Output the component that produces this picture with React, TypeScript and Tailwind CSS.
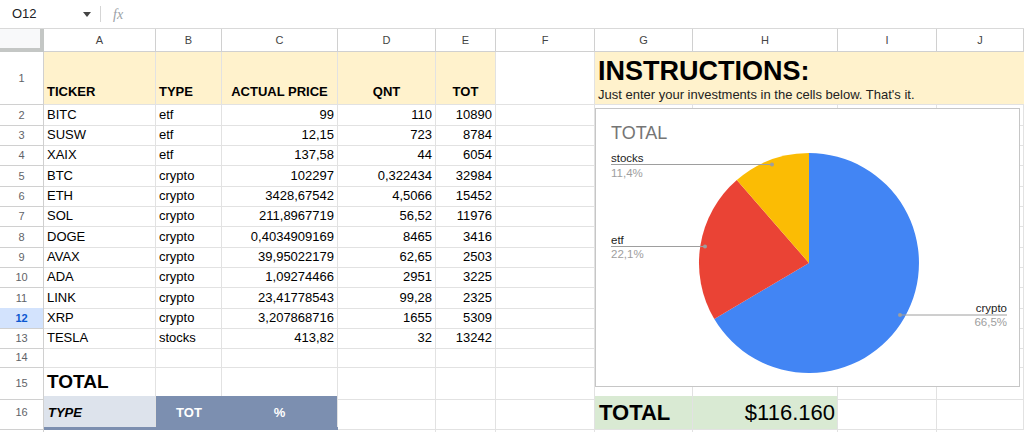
import React from "react";

const COLS = "grid grid-cols-[44px_112px_66px_116px_98px_60px_99px_98px_145px_99px_87px]";
const cell = "border-r border-b border-[#e2e2e2] overflow-visible whitespace-nowrap";
const rh = "border-r border-b border-[#d0d0d0] flex items-center justify-center text-[11px] text-[#5f6368]";

const data: [string, string, string, string, string][] = [
  ["BITC", "etf", "99", "110", "10890"],
  ["SUSW", "etf", "12,15", "723", "8784"],
  ["XAIX", "etf", "137,58", "44", "6054"],
  ["BTC", "crypto", "102297", "0,322434", "32984"],
  ["ETH", "crypto", "3428,67542", "4,5066", "15452"],
  ["SOL", "crypto", "211,8967719", "56,52", "11976"],
  ["DOGE", "crypto", "0,4034909169", "8465", "3416"],
  ["AVAX", "crypto", "39,95022179", "62,65", "2503"],
  ["ADA", "crypto", "1,09274466", "2951", "3225"],
  ["LINK", "crypto", "23,41778543", "99,28", "2325"],
  ["XRP", "crypto", "3,207868716", "1655", "5309"],
  ["TESLA", "stocks", "413,82", "32", "13242"],
];
const heights = ["h-[20px]", "h-[20px]", "h-[21px]", "h-[20px]", "h-[20px]", "h-[21px]", "h-[20px]", "h-[20px]", "h-[21px]", "h-[20px]", "h-[20px]", "h-[20px]"];

function Empty({ n }: { n: number }) {
  return (
    <>
      {Array.from({ length: n }).map((_, i) => (
        <div key={i} className={cell} />
      ))}
    </>
  );
}

function Chart() {
  return (
    <div className="absolute left-[595px] top-[108px] w-[425px] h-[279px] bg-white border border-[#c6c6c6]">
      <svg width="423" height="277" viewBox="0 0 423 277" className="block">
        <path d="M213 154 L213 44 A110 110 0 1 1 118.3 210 Z" fill="#4285f4" />
        <path d="M213 154 L118.3 210 A110 110 0 0 1 140.8 71 Z" fill="#ea4335" />
        <path d="M213 154 L140.8 71 A110 110 0 0 1 213 44 Z" fill="#fbbc04" />
        <text x="15" y="30" fontSize="18" fill="#757575" fontFamily="Liberation Sans, Arial, sans-serif">TOTAL</text>
        <g fontFamily="Liberation Sans, Arial, sans-serif" fontSize="11.5">
          <text x="15" y="53" fill="#222">stocks</text>
          <line x1="15" y1="55.5" x2="176" y2="55.5" stroke="#9e9e9e" strokeWidth="1" />
          <circle cx="176" cy="55.5" r="2" fill="#9e9e9e" />
          <text x="15" y="68" fill="#9e9e9e">11,4%</text>
          <text x="15" y="135" fill="#222">etf</text>
          <line x1="15" y1="137.5" x2="109" y2="137.5" stroke="#9e9e9e" strokeWidth="1" />
          <circle cx="109" cy="137.5" r="2" fill="#9e9e9e" />
          <text x="15" y="149" fill="#9e9e9e">22,1%</text>
          <text x="411" y="202.5" fill="#222" textAnchor="end">crypto</text>
          <line x1="304" y1="206" x2="411" y2="206" stroke="#9e9e9e" strokeWidth="1" />
          <circle cx="304" cy="206" r="2" fill="#9e9e9e" />
          <text x="411" y="217" fill="#9e9e9e" textAnchor="end">66,5%</text>
        </g>
      </svg>
    </div>
  );
}

export default function App() {
  return (
    <div className="relative w-[1024px] h-[432px] overflow-hidden bg-white font-['Liberation_Sans',Arial,sans-serif] text-black">
      {/* formula bar */}
      <div className="h-[29px] flex items-center border-b border-[#d9d9d9]">
        <div className="w-[100px] pl-[12px] flex items-center text-[13px] text-[#202124]">
          <span className="flex-1">O12</span>
          <svg width="8" height="5" viewBox="0 0 8 5" className="mr-[9px]">
            <path d="M0 0 L8 0 L4 5 Z" fill="#444" />
          </svg>
        </div>
        <div className="w-px h-[16px] bg-[#d5d5d5]" />
        <span className="ml-[12px] text-[14px] italic text-[#9aa0a6] font-['Liberation_Serif',serif]">fx</span>
      </div>
      {/* column headers */}
      <div className={`${COLS} h-[23px]`}>
        <div className="bg-[#f8f9fa] border-r-[4px] border-b-[4px] border-[#c4c7c5]" />
        {["A", "B", "C", "D", "E", "F", "G", "H", "I", "J"].map((c) => (
          <div key={c} className="border-r border-b border-[#d0d0d0] flex items-center justify-center text-[11px] text-[#444]">
            {c}
          </div>
        ))}
      </div>
      {/* row 1 */}
      <div className={`${COLS} h-[53px]`}>
        <div className={rh}>1</div>
        {["TICKER", "TYPE"].map((t) => (
          <div key={t} className={`${cell} bg-[#fff2cc] flex items-end pb-[3px] pl-[3px] text-[13px] font-bold`}>{t}</div>
        ))}
        {["ACTUAL PRICE", "QNT", "TOT"].map((t) => (
          <div key={t} className={`${cell} bg-[#fff2cc] flex items-end justify-center pb-[3px] text-[13px] font-bold`}>{t}</div>
        ))}
        <div className={cell} />
        <div className="col-span-4 bg-[#fff2cc] border-b border-[#e2e2e2] pl-[3px] pt-[4px] flex flex-col">
          <span className="text-[27px] font-bold leading-[30px]">INSTRUCTIONS:</span>
          <span className="text-[13px] text-[#222] leading-[16px] mt-[1px]">Just enter your investments in the cells below. That's it.</span>
        </div>
      </div>
      {/* rows 2-13 */}
      {data.map((r, i) => (
        <div key={i} className={`${COLS} ${heights[i]}`}>
          <div className={i === 10 ? "border-r border-b border-[#d0d0d0] bg-[#d3e3fd] flex items-center justify-center text-[11px] font-bold text-[#0b57d0]" : rh}>
            {i + 2}
          </div>
          <div className={`${cell} flex items-center pl-[3px] text-[13px]`}>{r[0]}</div>
          <div className={`${cell} flex items-center pl-[3px] text-[13px]`}>{r[1]}</div>
          <div className={`${cell} flex items-center justify-end pr-[3px] text-[13px]`}>{r[2]}</div>
          <div className={`${cell} flex items-center justify-end pr-[3px] text-[13px]`}>{r[3]}</div>
          <div className={`${cell} flex items-center justify-end pr-[3px] text-[13px]`}>{r[4]}</div>
          <Empty n={5} />
        </div>
      ))}
      {/* row 14 */}
      <div className={`${COLS} h-[20px]`}>
        <div className={rh}>14</div>
        <Empty n={10} />
      </div>
      {/* row 15 */}
      <div className={`${COLS} h-[28px]`}>
        <div className={rh}>15</div>
        <div className={`${cell} flex items-end pb-[2px] pl-[3px] text-[19px] font-bold`}>TOTAL</div>
        <Empty n={9} />
      </div>
      {/* row 16 */}
      <div className={`${COLS} h-[31px]`}>
        <div className={rh}>16</div>
        <div className={`${cell} bg-[#dde3ec] flex items-center pl-[4px] text-[13px] font-bold italic`}>TYPE</div>
        <div className="border-b border-[#e2e2e2] bg-[#7c8fb0] flex items-center justify-center text-[13px] font-bold text-white">TOT</div>
        <div className={`${cell} bg-[#7c8fb0] flex items-center justify-center text-[13px] font-bold text-white`}>%</div>
        <Empty n={3} />
        <div className={`${cell} bg-[#d9ead3] flex items-center pl-[4px] text-[22px] font-bold`}>TOTAL</div>
        <div className={`${cell} bg-[#d9ead3] flex items-center justify-end pr-[2px] text-[22px]`}>$116.160</div>
        <Empty n={2} />
      </div>
      {/* row 17 */}
      <div className={`${COLS} h-[5px]`}>
        <div className="border-r border-[#d0d0d0]" />
        <div className="bg-[#7c8fb0] h-[3px]" />
        <div className="bg-[#7c8fb0] h-[3px]" />
        <div className="bg-[#7c8fb0] h-[3px]" />
        <div className="border-r border-[#e2e2e2]" />
        <div className="border-r border-[#e2e2e2]" />
        <div className="border-r border-[#e2e2e2]" />
        <div className="border-r border-[#e2e2e2]" />
        <div className="border-r border-[#e2e2e2]" />
        <div className="border-r border-[#e2e2e2]" />
        <div />
      </div>
      <Chart />
    </div>
  );
}
